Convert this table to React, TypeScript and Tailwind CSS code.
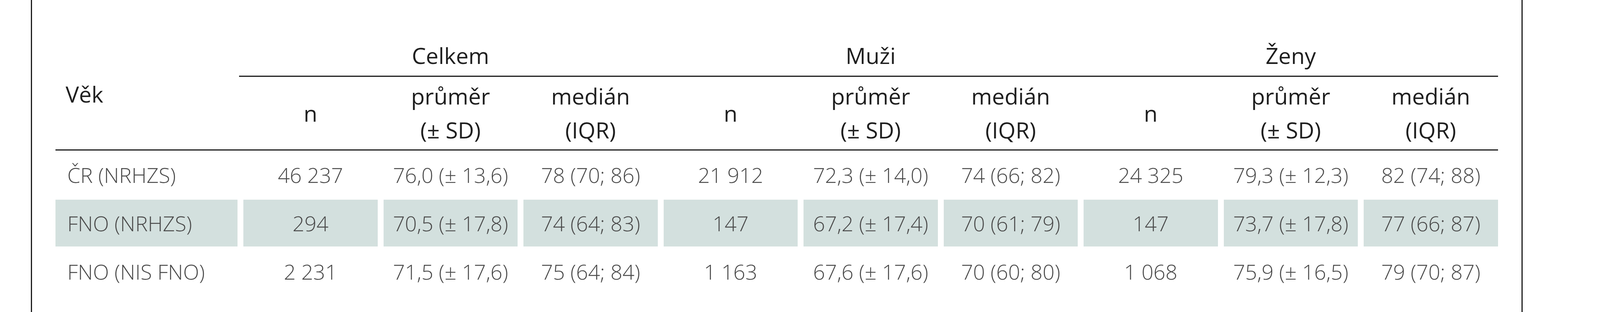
import React from "react";

const groups = ["Celkem", "Muži", "Ženy"];

const rows: { label: string; cells: string[]; shaded?: boolean }[] = [
  {
    label: "ČR (NRHZS)",
    cells: ["46 237", "76,0 (± 13,6)", "78 (70; 86)", "21 912", "72,3 (± 14,0)", "74 (66; 82)", "24 325", "79,3 (± 12,3)", "82 (74; 88)"],
  },
  {
    label: "FNO (NRHZS)",
    shaded: true,
    cells: ["294", "70,5 (± 17,8)", "74 (64; 83)", "147", "67,2 (± 17,4)", "70 (61; 79)", "147", "73,7 (± 17,8)", "77 (66; 87)"],
  },
  {
    label: "FNO (NIS FNO)",
    cells: ["2 231", "71,5 (± 17,6)", "75 (64; 84)", "1 163", "67,6 (± 17,6)", "70 (60; 80)", "1 068", "75,9 (± 16,5)", "79 (70; 87)"],
  },
];

function SubHeaders() {
  return (
    <>
      <div className="flex h-[186px] items-center justify-center">n</div>
      <div className="flex h-[186px] flex-col items-center justify-center whitespace-nowrap">
        <span>průměr</span>
        <span>(± SD)</span>
      </div>
      <div className="flex h-[186px] flex-col items-center justify-center whitespace-nowrap">
        <span>medián</span>
        <span>(IQR)</span>
      </div>
    </>
  );
}

export default function App() {
  return (
    <div className="h-[800px] w-full bg-white pl-[1.924%] font-['Open_Sans',sans-serif]">
      <div className="h-full w-[95.08%] border-x-[3px] border-[#1c1c1c] pt-[99px]">
        <div className="ml-[1.589%] grid w-[96.82%] grid-cols-[minmax(0,530fr)_repeat(9,minmax(0,391fr))] gap-x-[0.404%] text-[1.4vw] leading-[87px] text-[#1f1f1f]">
          {/* header */}
          <div className="col-start-1 row-span-3 row-start-1 flex items-center pl-[5.5%]">Věk</div>
          {groups.map((g) => (
            <div key={g} className="col-span-3 flex h-[95px] items-end justify-center pb-[8px]">
              {g}
            </div>
          ))}
          <div className="col-span-9 col-start-2 -ml-[0.354%] h-[3px] bg-[#1c1c1c]" />
          <SubHeaders />
          <SubHeaders />
          <SubHeaders />
          <div className="col-span-10 h-[3px] bg-[#1c1c1c]" />

          {/* body */}
          {rows.map((r) => (
            <React.Fragment key={r.label}>
              <div
                className={
                  "my-[2px] flex h-[120px] items-center whitespace-nowrap pl-[6.4%] text-[1.312vw] font-light text-[#4a4a4a] " +
                  (r.shaded ? "bg-[#d3e0de]" : "")
                }
              >
                {r.label}
              </div>
              {r.cells.map((c, i) => (
                <div
                  key={i}
                  className={
                    "my-[2px] flex h-[120px] items-center justify-center whitespace-nowrap text-[1.312vw] font-light text-[#4a4a4a] " +
                    (r.shaded ? "bg-[#d3e0de]" : "")
                  }
                >
                  {c}
                </div>
              ))}
            </React.Fragment>
          ))}
        </div>
      </div>
    </div>
  );
}
